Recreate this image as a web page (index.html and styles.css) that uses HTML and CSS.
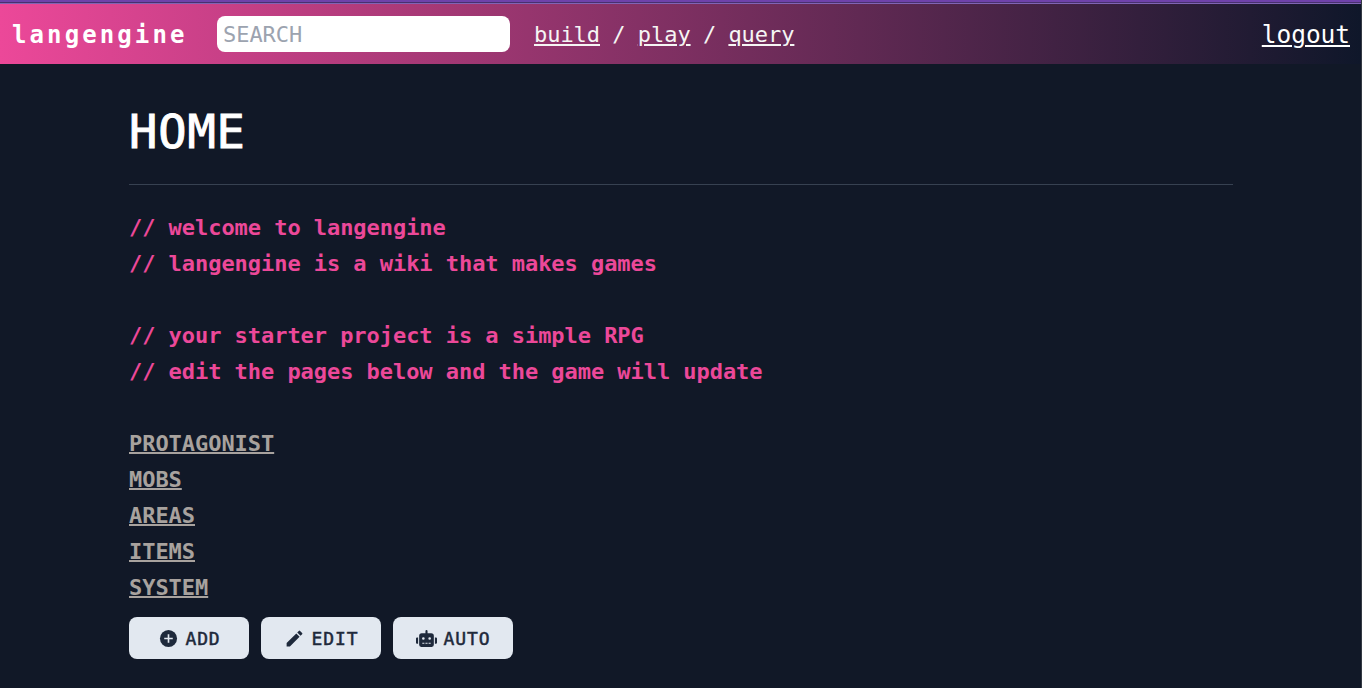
FILE: index.html
```html
<!DOCTYPE html>
<html lang="en">
<head>
<meta charset="utf-8">
<title>langengine</title>
<link rel="stylesheet" href="styles.css">
</head>
<body>
<div class="strip"></div>
<header class="topbar">
  <span class="brand">langengine</span>
  <input class="search" type="text" placeholder="SEARCH" aria-label="Search">
  <nav class="nav"><a href="#">build</a> / <a href="#">play</a> / <a href="#">query</a></nav>
  <a class="logout" href="#">logout</a>
</header>
<main class="page">
  <h1 class="title">HOME</h1>
  <div class="comments">
    <p>// welcome to langengine</p>
    <p>// langengine is a wiki that makes games</p>
    <p class="gap">// your starter project is a simple RPG</p>
    <p>// edit the pages below and the game will update</p>
  </div>
  <ul class="links">
    <li><a href="#">PROTAGONIST</a></li>
    <li><a href="#">MOBS</a></li>
    <li><a href="#">AREAS</a></li>
    <li><a href="#">ITEMS</a></li>
    <li><a href="#">SYSTEM</a></li>
  </ul>
  <div class="actions">
    <button class="btn" type="button">
      <svg class="icon add" viewBox="0 0 20 20"><circle cx="10" cy="10" r="9"/><path class="plus" d="M10 5.500v9M5.500 10h9"/></svg>
      <span>ADD</span>
    </button>
    <button class="btn" type="button">
      <svg class="icon pencil" viewBox="0 0 24 24"><path d="M3 17.250V21h3.750L17.810 9.940l-3.750-3.750L3 17.250zM20.710 7.040a1 1 0 0 0 0-1.410l-2.340-2.340a1 1 0 0 0-1.410 0l-1.830 1.830 3.750 3.750 1.830-1.830z"/></svg>
      <span>EDIT</span>
    </button>
    <button class="btn" type="button">
      <svg class="icon robot" viewBox="0 0 640 512"><path fill-rule="evenodd" d="M32 224h32v192H32a32 32 0 0 1-32-32V256a32 32 0 0 1 32-32zm512-48v272a64 64 0 0 1-64 64H160a64 64 0 0 1-64-64V176a80 80 0 0 1 80-80h112V32a32 32 0 0 1 64 0v64h112a80 80 0 0 1 80 80zM264 256a40 40 0 1 0-80 0 40 40 0 0 0 80 0zm-8 128h-64v32h64zm96 0h-64v32h64zm104-128a40 40 0 1 0-80 0 40 40 0 0 0 80 0zm-8 128h-64v32h64zm192-128v128a32 32 0 0 1-32 32h-32V224h32a32 32 0 0 1 32 32z"/></svg>
      <span>AUTO</span>
    </button>
  </div>
</main>
</body>
</html>
```

FILE: styles.css
```css
* { box-sizing: border-box; }
body {
  margin: 0;
  height: 688px;
  overflow: hidden;
  background: #111827;
  border-right: 1px solid #343a43;
  color: #fff;
  font-family: "DejaVu Sans Mono", monospace;
  font-size: 22px;
  letter-spacing: -0.047px;
}
a { color: inherit; text-decoration: underline; text-decoration-thickness: 2px; text-underline-offset: 2px; }
.strip {
  height: 4px;
  background: linear-gradient(#6f42aa 0 2px, #48306f 2px 3px, #8064b5 3px 4px);
}
.topbar {
  display: flex;
  align-items: center;
  height: 60px;
  padding: 0 11px 0 12px;
  background: linear-gradient(to right, #ec4899, #0f172a);
}
.brand { width: 205px; padding-top: 1px; font-size: 24px; font-weight: bold; letter-spacing: 3.1px; }
.search {
  width: 293px;
  height: 36px;
  padding: 1px 6px 0;
  border: 0;
  border-radius: 8px;
  background: #fff;
  font: inherit;
  letter-spacing: inherit;
  color: #111827;
}
.search::placeholder { color: #9ca3af; opacity: 1; }
.nav { margin-left: 24px; padding-top: 1px; color: #f5f5f4; white-space: nowrap; word-spacing: -0.9px; }
.logout { margin-left: auto; padding-top: 1px; font-size: 24.5px; }
.page { width: 1104px; margin-left: 129px; }
.title {
  height: 121px;
  margin: 0;
  padding-top: 40px;
  border-bottom: 1px solid #374151;
  font-size: 47px;
  font-weight: normal;
  line-height: 55px;
  letter-spacing: 0.9px;
  -webkit-text-stroke: 1px #fff;
}
.comments { padding-top: 25px; color: #ec4899; font-weight: bold; line-height: 36px; }
.comments p { margin: 0; }
.comments .gap { margin-top: 36px; }
.links { margin: 36px 0 0; padding: 0; list-style: none; color: #a8a29e; font-weight: bold; line-height: 36px; }
.links a { text-underline-offset: 1px; }
.actions { display: flex; gap: 12px; margin-top: 11px; }
.btn {
  display: flex;
  align-items: center;
  justify-content: center;
  gap: 7px;
  width: 120px;
  height: 42px;
  padding: 0;
  border: 0;
  border-radius: 8px;
  background: #e2e8f0;
  color: #1e293b;
  font: 18px "DejaVu Sans Mono", monospace;
  letter-spacing: 0.9px;
  -webkit-text-stroke: 0.5px #1e293b;
}
.icon { fill: #1e293b; flex: none; }
.add { width: 19px; height: 19px; margin-left: 2px; }
.plus { fill: none; stroke: #e2e8f0; stroke-width: 1.7; }
.pencil { width: 21px; height: 21px; }
.robot { width: 21px; height: 17px; }
```
